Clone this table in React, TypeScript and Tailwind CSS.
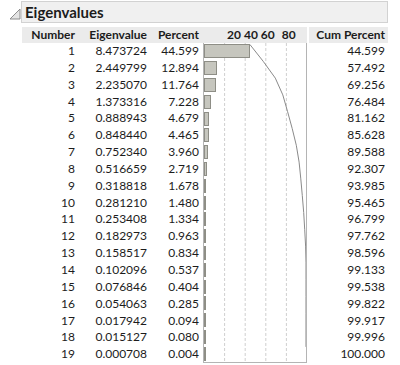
const rows: [number, string, string, string][] = [
  [1, "8.473724", "44.599", "44.599"],
  [2, "2.449799", "12.894", "57.492"],
  [3, "2.235070", "11.764", "69.256"],
  [4, "1.373316", "7.228", "76.484"],
  [5, "0.888943", "4.679", "81.162"],
  [6, "0.848440", "4.465", "85.628"],
  [7, "0.752340", "3.960", "89.588"],
  [8, "0.516659", "2.719", "92.307"],
  [9, "0.318818", "1.678", "93.985"],
  [10, "0.281210", "1.480", "95.465"],
  [11, "0.253408", "1.334", "96.799"],
  [12, "0.182973", "0.963", "97.762"],
  [13, "0.158517", "0.834", "98.596"],
  [14, "0.102096", "0.537", "99.133"],
  [15, "0.076846", "0.404", "99.538"],
  [16, "0.054063", "0.285", "99.822"],
  [17, "0.017942", "0.094", "99.917"],
  [18, "0.015127", "0.080", "99.996"],
  [19, "0.000708", "0.004", "100.000"],
];

const ROW_H = 16.8;
const SCALE = 1.03;

function Chart() {
  const points = rows
    .map(([, , , cum], i) => {
      const x = Math.min(Number(cum) * SCALE, 102);
      const y = i * ROW_H + 1.5;
      return `${x.toFixed(1)},${y.toFixed(1)}`;
    })
    .join(" ");
  const h = rows.length * ROW_H;

  return (
    <div className="col-start-4 row-start-2 row-span-19 relative border-l border-r border-b border-[#b4b4b4]">
      <svg
        className="absolute inset-0"
        width="102"
        height={h}
        viewBox={`0 0 102 ${h}`}
      >
        {[20, 40, 60, 80].map((v) => (
          <line
            key={v}
            x1={v * SCALE}
            x2={v * SCALE}
            y1="0"
            y2={h}
            stroke="#cfcfcf"
            strokeDasharray="3 2"
          />
        ))}
      </svg>
      <div className="relative flex flex-col">
        {rows.map(([n, , pct]) => (
          <div key={n} className="h-[16.8px] flex items-center">
            <div
              className="h-[14px] bg-[#c6c6be] border border-[#8e8e86]"
              style={{ width: Math.max(Number(pct) * SCALE, 1.5) }}
            />
          </div>
        ))}
      </div>
      <svg
        className="absolute inset-0"
        width="102"
        height={h}
        viewBox={`0 0 102 ${h}`}
      >
        <polyline points={points} fill="none" stroke="#8a8a8a" strokeWidth="1" />
      </svg>
    </div>
  );
}

export default function App() {
  return (
    <div className="w-[400px] h-[365px] bg-white pt-[1px] text-[#1c1c1c] font-['Lato',sans-serif]">
      <div className="flex items-start">
        <div className="w-[21px] h-[21px] flex items-center justify-center">
          <svg width="12" height="12" viewBox="0 0 12 12" className="ml-[8px] mt-[4px]">
            <polygon points="1,11 11,1 11,11" fill="#e4e4e4" stroke="#8c8c8c" strokeWidth="1" />
          </svg>
        </div>
        <div className="w-[367px] h-[22px] bg-[#f0f0f0] border border-[#d2d2d2] flex items-center pl-[3px] text-[15px] font-bold leading-none">
          Eigenvalues
        </div>
      </div>

      <div className="ml-[22px] mt-[4px] w-[366px] grid grid-cols-[58px_72px_51px_104px_81px] text-[12px] leading-[16.8px] whitespace-nowrap">
        <div className="h-[16px] bg-[#ebebeb] font-bold text-right pr-[5px] leading-[16px]">Number</div>
        <div className="h-[16px] bg-[#ebebeb] font-bold text-right pr-[5px] leading-[16px]">Eigenvalue</div>
        <div className="h-[16px] bg-[#ebebeb] font-bold text-right pr-[4px] leading-[16px]">Percent</div>
        <div className="h-[16px] bg-[#ebebeb] font-bold leading-[16px] flex pl-[24px] gap-[3px]">
          <span>20</span>
          <span>40</span>
          <span>60</span>
          <span className="ml-[4px]">80</span>
        </div>
        <div className="h-[16px] bg-[#ebebeb] font-bold text-right pr-[3px] leading-[16px] ml-[2px]">Cum Percent</div>

        <Chart />

        {rows.map(([n, ev, pct, cum]) => (
          <Row key={n} n={n} ev={ev} pct={pct} cum={cum} />
        ))}
      </div>
    </div>
  );
}

function Row({ n, ev, pct, cum }: { n: number; ev: string; pct: string; cum: string }) {
  return (
    <>
      <div className="text-right pr-[5px] h-[16.8px]">{n}</div>
      <div className="text-right pr-[5px] h-[16.8px]">{ev}</div>
      <div className="text-right pr-[4px] h-[16.8px]">{pct}</div>
      <div className="text-right pr-[3px] h-[16.8px] col-start-5">{cum}</div>
    </>
  );
}
